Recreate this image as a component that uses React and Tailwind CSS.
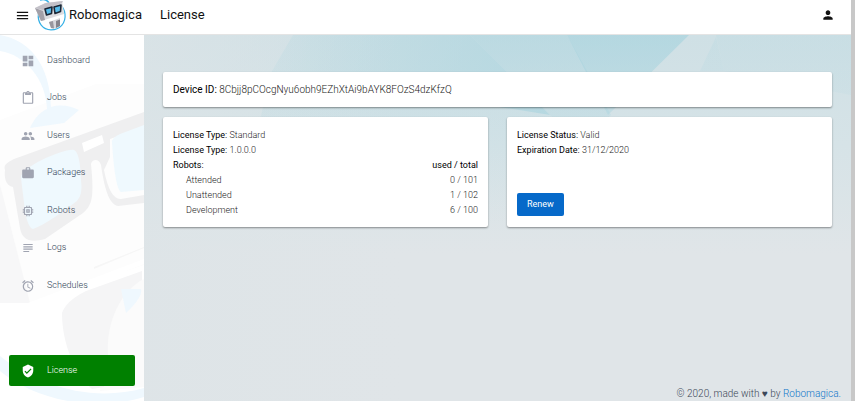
import {
  MdAlarm,
  MdContentPaste,
  MdDashboard,
  MdMemory,
  MdMenu,
  MdPeople,
  MdPerson,
  MdSubject,
  MdVerifiedUser,
  MdWork,
} from "react-icons/md";

const links = [
  { name: "Dashboard", icon: MdDashboard },
  { name: "Jobs", icon: MdContentPaste },
  { name: "Users", icon: MdPeople },
  { name: "Packages", icon: MdWork },
  { name: "Robots", icon: MdMemory },
  { name: "Logs", icon: MdSubject },
  { name: "Schedules", icon: MdAlarm },
];

const robots = [
  { type: "Attended", used: 0, total: 101 },
  { type: "Unattended", used: 1, total: 102 },
  { type: "Development", used: 6, total: 100 },
];

const Logo = () => (
  <svg className="size-8 shrink-0" viewBox="0 0 32 32" aria-hidden="true">
    <path
      d="M3.500 14C2 24 8 30.800 16 30.800C25 30.800 31 24 30 15C29.500 10 27 7 24 5"
      fill="none"
      stroke="#35b0e6"
      strokeWidth="1.200"
    />
    <path d="M5 1C9 -.5 12 1 14 4" fill="none" stroke="#35b0e6" strokeWidth="1.500" />
    <path d="M0 9L10 4L27 2L29 15L6 22Z" fill="#dcdce0" />
    <path d="M0 9L8 12L10 21L6 22Z" fill="#a3a0a8" />
    <path d="M0 9L11 4L28 2L27 4L8 11Z" fill="#c3c1c8" />
    <path
      d="M10 10L17 8L16.500 14.500L11.500 16ZM19 8L26 6L25.500 12.500L20 14.500Z"
      fill="#56bbea"
      stroke="#1b2736"
      strokeWidth="1.600"
      strokeLinejoin="round"
    />
    <path d="M14 23L25 19L25 27C22 29 19 30 16 29Z" fill="#d7d7dc" />
    <path d="M14 23L18 22L19 29.500L16 29Z" fill="#98969e" />
    <path d="M21 22L25 20.500V27L21 29Z" fill="#85838c" />
  </svg>
);

const SidebarArt = () => (
  <svg
    className="absolute inset-0 h-full w-full"
    viewBox="0 0 144 366"
    preserveAspectRatio="xMinYMin slice"
    aria-hidden="true"
  >
    <path d="M0 85L96 49L144 49V230L28 268H0Z" fill="#fdfdfd" />
    <path d="M0 150L4 165L30 268H0Z" fill="#f7f7f8" />
    <path
      d="M0 0C30 5 50 30 51 72C61 69 71 71 79 75L64 88L30 93C34 84 40 77 47 74C46 45 26 20 0 16Z"
      fill="#eff8fe"
    />
    <path
      d="M5 135C3 130 8 127 14 124L144 77V92L110 104V122L104 135Q110 165 121 164L144 160V168L118 171C108 169 104 150 101 130C99 123 92 124 91 129C94 160 93 170 83 178L45 204C30 208 22 205 20 193L13 152C6 151 4 143 5 135Z"
      fill="#efeff0"
    />
    <path d="M21 143C20 132 65 113 74 115Q80 117 81 145Q83 160 77 166C62 177 45 190 33 194Q28 193 25 176Z" fill="#eff9fe" />
    <path d="M112 108Q111 103 120 99L144 90V155L121 157Q115 154 112 108Z" fill="#eff9fe" />
    <path d="M82 108L102 100L104 108L84 117Z" fill="#fff" />
    <path d="M28 268L144 224V229L44 268Z" fill="#fff" />
    <path d="M94 232L144 212V213L94 234Z" fill="#f6f6f6" />
    <path d="M144 244V352L100 356L108 300C110 275 124 254 144 244Z" fill="#fbfbfb" />
    <path d="M142 236V245C122 256 106 285 108 320L104 352L92 354C76 340 62 310 62 278Q66 266 86 256Z" fill="#f5f5f6" />
    <path d="M121 254L141 254Q143 262 126 278Z" fill="#eff8fe" />
    <path d="M0 336C34 364 92 378 144 362V353C92 368 35 350 0 321Z" fill="#eff8fe" />
  </svg>
);

const MainArt = () => (
  <svg
    className="absolute inset-0 h-full w-full"
    viewBox="0 0 707 366"
    preserveAspectRatio="none"
    aria-hidden="true"
  >
    <defs>
      <linearGradient id="base" x1="0" y1="0" x2="0" y2="1">
        <stop offset="0" stopColor="#cfe0e5" />
        <stop offset="0.300" stopColor="#d6e3e7" />
        <stop offset="0.600" stopColor="#e0e5e8" />
        <stop offset="1" stopColor="#e0e5e8" />
      </linearGradient>
      <linearGradient id="left" x1="0" y1="0" x2="1" y2="0">
        <stop offset="0" stopColor="#dde4e7" stopOpacity="0.700" />
        <stop offset="1" stopColor="#dde4e7" stopOpacity="0" />
      </linearGradient>
      <linearGradient id="ray" x1="0" y1="0" x2="1" y2="0">
        <stop offset="0" stopColor="#a6d3de" stopOpacity="0.150" />
        <stop offset="1" stopColor="#a6d3de" stopOpacity="0.650" />
      </linearGradient>
      <linearGradient id="teal" gradientUnits="userSpaceOnUse" x1="0" y1="0" x2="0" y2="190">
        <stop offset="0" stopColor="#a6d3de" stopOpacity="0.650" />
        <stop offset="1" stopColor="#a6d3de" stopOpacity="0" />
      </linearGradient>
    </defs>
    <rect width="707" height="366" fill="url(#base)" />
    <rect width="260" height="366" fill="url(#left)" />
    <path d="M149 0H326L406 80L128 36Z" fill="url(#ray)" />
    <path d="M128 36L406 80L436 110L380 190H90Z" fill="url(#teal)" opacity="0.400" />
    <path d="M326 0H423L443 36L467 80L436 110Z" fill="url(#teal)" opacity="0.750" />
    <path d="M423 0H545L464 80Z" fill="url(#teal)" />
    <path d="M572 2L556 36H580Z" fill="url(#teal)" opacity="0.300" />
    <path d="M572 0H707V60L580 36Z" fill="url(#teal)" opacity="0.250" />
  </svg>
);

const Card = ({ className = "", children }) => (
  <section
    className={`rounded-xs bg-white px-[10px] text-[#222] shadow-[0_1px_2px_rgba(0,0,0,0.4)] ${className}`}
  >
    {children}
  </section>
);

const Field = ({ label, value }) => (
  <p>
    <span className="font-normal text-black">{label}:</span> {value}
  </p>
);

const Header = () => (
  <header className="flex h-[35px] items-center border-b border-[#e4e4e4] bg-white pb-1 text-[#111]">
    <div className="flex w-36 items-center pl-[15px]">
      <button type="button" aria-label="Toggle menu">
        <MdMenu className="size-[15px]" />
      </button>
      <a href="#home" className="ml-[5px] flex items-center gap-[2px] text-[13px]">
        <Logo />
        Robomagica
      </a>
    </div>
    <h1 className="pl-4 text-[13px]">License</h1>
    <button type="button" aria-label="Account" className="mr-4 ml-auto">
      <MdPerson className="size-[14px]" />
    </button>
  </header>
);

const Sidebar = () => (
  <aside className="relative w-36 shrink-0 overflow-hidden bg-white">
    <SidebarArt />
    <nav className="relative flex h-full flex-col justify-between px-[9px] pt-[10px] pb-[15px] text-[9px] font-light text-[#2f3f55]">
      <ul className="flex h-64 flex-col justify-between">
        {links.map(({ name, icon: Icon }) => (
          <li key={name}>
            <a href={`#${name.toLowerCase()}`} className="flex h-[31px] items-center gap-3 pl-3">
              <Icon className="size-[14px] text-[#a0a4b1]" />
              {name}
            </a>
          </li>
        ))}
      </ul>
      <a
        href="#license"
        aria-current="page"
        className="flex h-[31px] items-center gap-3 rounded-xs bg-[#008000] pl-3 text-white"
      >
        <MdVerifiedUser className="size-[14px]" />
        License
      </a>
    </nav>
  </aside>
);

const App = () => {
  return (
    <div className="mr-px flex min-h-screen flex-col border-r-4 border-[#c8c8c8] font-['Roboto',sans-serif]">
      <Header />
      <div className="flex flex-1">
        <Sidebar />
        <main className="relative flex flex-1 flex-col">
          <MainArt />
          <div className="relative grid grid-cols-2 gap-x-[19px] gap-y-[10px] px-[19px] pt-[37px]">
            <Card className="col-span-2 py-[10px] text-[10px] leading-[15px] font-light">
              <Field label="Device ID" value="8Cbjj8pCOcgNyu6obh9EZhXtAi9bAYK8FOzS4dzKfzQ" />
            </Card>
            <Card className="pt-[11px] pb-[9px] text-[9px] leading-[15px] font-light">
              <Field label="License Type" value="Standard" />
              <Field label="License Type" value="1.0.0.0" />
              <table className="w-full">
                <thead className="text-black">
                  <tr>
                    <th className="text-left font-normal">Robots:</th>
                    <th className="text-right font-normal">used / total</th>
                  </tr>
                </thead>
                <tbody>
                  {robots.map((robot) => (
                    <tr key={robot.type}>
                      <td className="pl-[13px]">{robot.type}</td>
                      <td className="text-right">
                        {robot.used} / {robot.total}
                      </td>
                    </tr>
                  ))}
                </tbody>
              </table>
            </Card>
            <Card className="flex flex-col pt-[11px] pb-[11px] text-[9px] leading-[15px] font-light">
              <Field label="License Status" value="Valid" />
              <Field label="Expiration Date" value="31/12/2020" />
              <button
                type="button"
                className="mt-auto self-start rounded-xs bg-[#0669c9] px-[10px] py-1 font-normal text-white"
              >
                Renew
              </button>
            </Card>
          </div>
          <footer className="relative mt-auto px-[10px] text-right text-[10px] leading-[14px] font-light text-[#3c4858]">
            © 2020, made with ♥ by{" "}
            <a href="#robomagica" className="text-[#0f75c9]">
              Robomagica.
            </a>
          </footer>
        </main>
      </div>
    </div>
  );
};

export default App;
